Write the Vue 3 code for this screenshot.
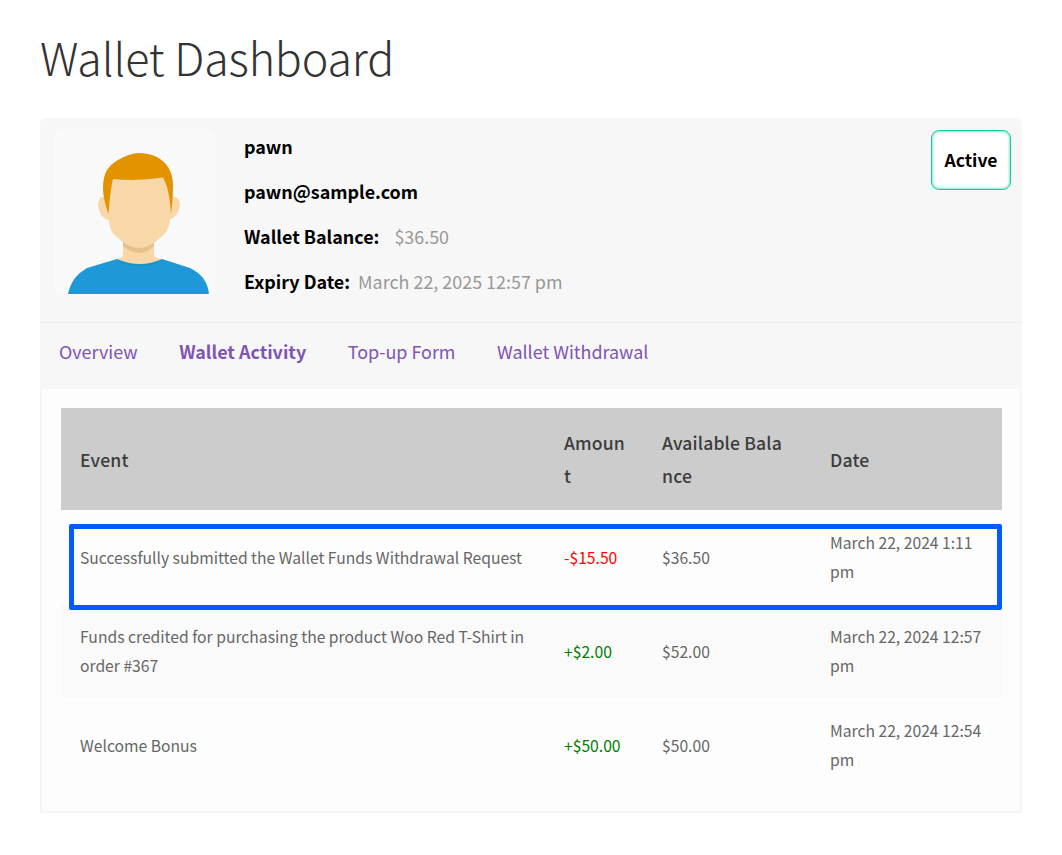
<template>
  <div class="page">
    <h1 class="title">Wallet Dashboard</h1>

    <div class="wallet-card">
      <!-- profile -->
      <div class="profile">
        <div class="avatar">
          <svg width="162" height="166" viewBox="0 0 162 166">
            <path d="M54 91 Q45 88 44 76 Q45 68 48 68 L121 68 Q125 68 126 76 Q125 88 114 91 Z" fill="#f8d7a8" />
            <path d="M69 108 L100 108 L100 127 Q102 129 108 130 L108 134 L86 138 L63 134 L63 130 Q67 129 69 127 Z" fill="#f8d7a8" />
            <path d="M69 112 L100 112 L100 117 Q86 131 69 117 Z" fill="#e8c08c" />
            <path d="M54 50 L117 48 L117 83 Q116 96 113 102 Q107 109 101 113 Q92 119 85 119 Q77 119 69 113 Q62 108 58 103 Q55 97 54 85 Z" fill="#f8d7a8" />
            <path d="M14 165 Q16 156 21 149 Q26 143 33 139 L63 130 Q86 140 108 130 L136 139 Q144 143 149 149 Q154 156 155 165 Z" fill="#1e98d6" />
            <path d="M66 133 Q86 140 105 133" fill="none" stroke="#1b93b8" stroke-width="1.5" />
            <path d="M54.5 85 Q49 70 49 59 Q49 48 53 41 Q57 35 64 31 Q74 25 84 24 Q94 24 103 28 Q110 32 114 38 Q119 46 119 56 Q119 72 117 85 Q116 68 113 58 Q111 52 109 48.5 Q84 52.5 59 50 Q56 62 54.5 85 Z" fill="#e39300" />
          </svg>
        </div>
        <div class="details">
          <p class="line">pawn</p>
          <p class="line">pawn@sample.com</p>
          <p class="line"><span class="label wide">Wallet Balance:</span><span class="muted">$36.50</span></p>
          <p class="line"><span class="label">Expiry Date:</span><span class="muted">March 22, 2025 12:57 pm</span></p>
        </div>
        <div class="status">Active</div>
      </div>

      <!-- tabs -->
      <nav class="tabs">
        <a v-for="tab in tabs" :key="tab" class="tab" :class="{ current: tab === 'Wallet Activity' }">{{ tab }}</a>
      </nav>

      <!-- activity -->
      <div class="activity">
        <table class="events">
          <colgroup>
            <col style="width: 484px" />
            <col style="width: 98px" />
            <col style="width: 168px" />
            <col style="width: 191px" />
          </colgroup>
          <thead>
            <tr>
              <th>Event</th>
              <th>Amount</th>
              <th>Available Balance</th>
              <th>Date</th>
            </tr>
          </thead>
          <tbody>
            <tr v-for="row in rows" :key="row.date + row.event">
              <td>{{ row.event }}</td>
              <td :class="row.amount[0] === '-' ? 'minus' : 'plus'">{{ row.amount }}</td>
              <td>{{ row.balance }}</td>
              <td>{{ row.date }}</td>
            </tr>
          </tbody>
        </table>
        <div class="highlight"></div>
      </div>
    </div>
  </div>
</template>

<script setup>
const tabs = ['Overview', 'Wallet Activity', 'Top-up Form', 'Wallet Withdrawal']

const rows = [
  {
    event: 'Successfully submitted the Wallet Funds Withdrawal Request',
    amount: '-$15.50',
    balance: '$36.50',
    date: 'March 22, 2024 1:11 pm'
  },
  {
    event: 'Funds credited for purchasing the product Woo Red T-Shirt in order #367',
    amount: '+$2.00',
    balance: '$52.00',
    date: 'March 22, 2024 12:57 pm'
  },
  {
    event: 'Welcome Bonus',
    amount: '+$50.00',
    balance: '$50.00',
    date: 'March 22, 2024 12:54 pm'
  }
]
</script>

<style>
html,
body {
  background: #fff;
}
</style>

<style scoped>
.page {
  width: 982px;
  margin-left: 40px;
  padding-bottom: 42px;
  font-family: "Noto Sans CJK SC", "Noto Sans", sans-serif;
  color: #3c3c3c;
}

.title {
  margin: 0;
  padding-top: 26px;
  height: 118px;
  box-sizing: border-box;
  font-size: 44.8px;
  line-height: 62px;
  font-weight: 200;
  letter-spacing: -0.13px;
  color: #333;
}

.wallet-card {
  background: #f7f7f7;
  border-radius: 6px;
}

.profile {
  display: flex;
  height: 205px;
  padding: 11px 11px 0 14px;
  box-sizing: border-box;
  border-bottom: 1px solid #ececec;
}

.avatar {
  width: 162px;
  height: 166px;
  background: #f9f9f9;
  border-radius: 8px;
  margin-right: 28px;
}

.avatar svg {
  display: block;
}

.details {
  flex: 1;
  margin-top: 2px;
}

.line {
  margin: 0;
  height: 45px;
  font-size: 17.92px;
  line-height: 30px;
  font-weight: 700;
  color: #000;
}

.label {
  margin-right: 8px;
}

.label.wide {
  margin-right: 15px;
}

.muted {
  font-weight: 400;
  color: #999;
}

.status {
  align-self: flex-start;
  margin-top: 1px;
  width: 80px;
  height: 60px;
  box-sizing: border-box;
  line-height: 57px;
  text-align: center;
  border: 1px solid #10cfa0;
  border-radius: 8px;
  background: #fff;
  box-shadow: inset 0 0 3px #10cfa0;
  font-size: 17.5px;
  font-weight: 700;
  color: #000;
}

.tabs {
  display: flex;
  gap: 41.6px;
  height: 66px;
  box-sizing: border-box;
  padding: 0 0 10px 19px;
  align-items: center;
}

.tab {
  font-size: 17.92px;
  color: #7f54b3;
}

.tab.current {
  font-weight: 700;
}

.activity {
  position: relative;
  background: #fdfdfd;
  padding: 19px 18px 19px 19px;
  border: 2px solid #f5f5f5;
  border-top: 0;
}

.events {
  width: 941px;
  table-layout: fixed;
  border-collapse: collapse;
}

th {
  background: #ccc;
  height: 102px;
  padding: 0 16px 0 19px;
  box-sizing: border-box;
  text-align: left;
  font-size: 17.6px;
  line-height: 33px;
  font-weight: 500;
  letter-spacing: 0.15px;
  color: #3c3c3c;
  word-break: break-all;
}

th:nth-child(3) {
  padding-right: 24px;
}

td {
  padding: 0 18px 0 19px;
  font-size: 15.68px;
  line-height: 29px;
  color: #666;
}

tbody tr {
  height: 94px;
}

tbody tr:nth-child(2) {
  background: #fafafa;
}

.minus {
  color: #f00;
}

.plus {
  color: #008000;
}

.highlight {
  position: absolute;
  left: 27px;
  top: 135px;
  width: 933px;
  height: 86px;
  box-sizing: border-box;
  border: 5px solid #005cff;
  border-radius: 2px;
}
</style>
